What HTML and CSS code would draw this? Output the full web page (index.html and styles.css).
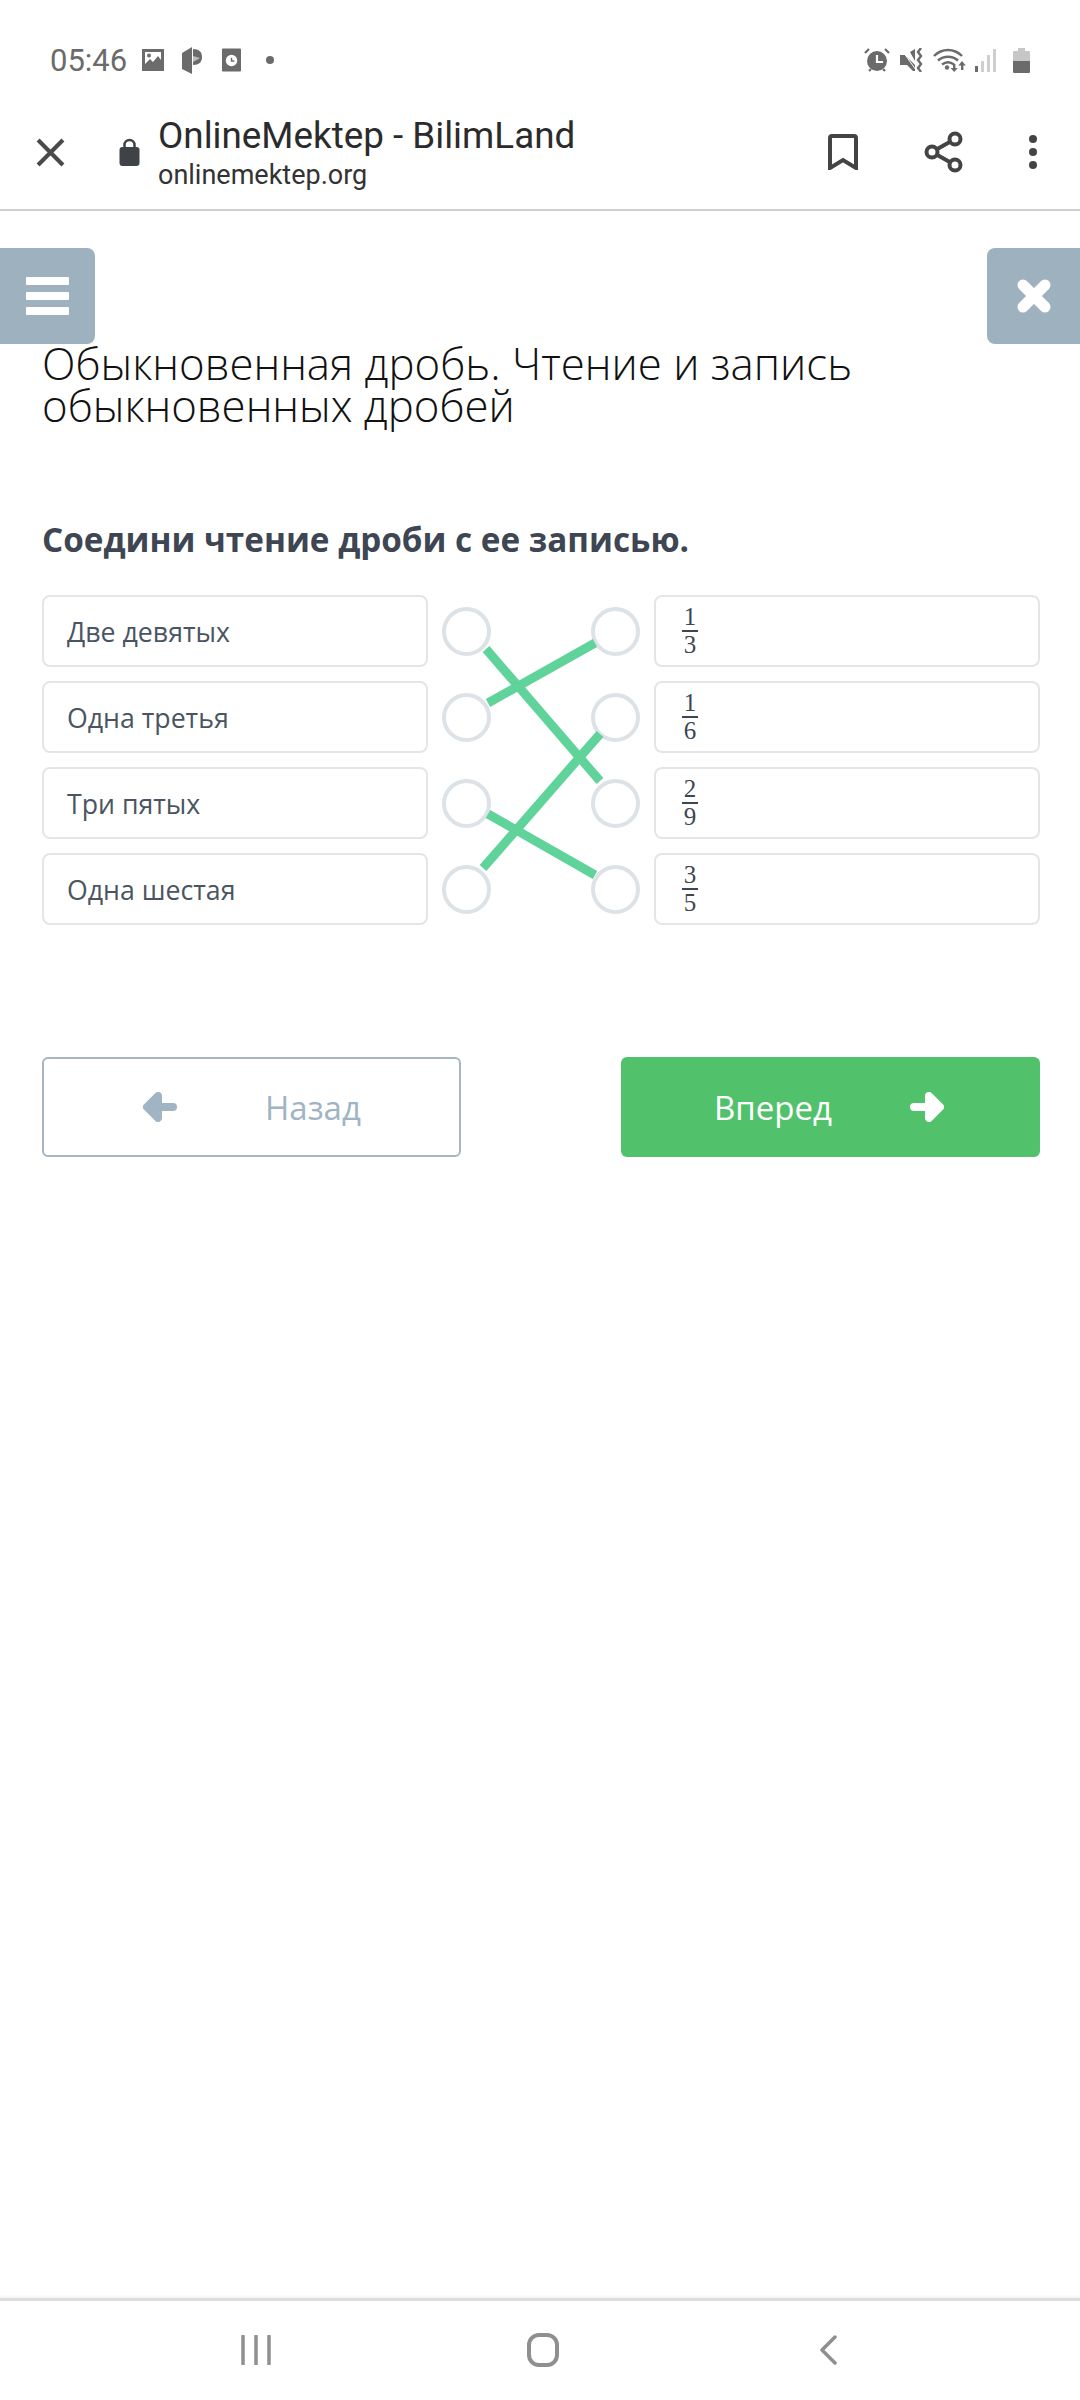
FILE: index.html
```html
<!DOCTYPE html>
<html lang="en">
<head>
    <meta charset="UTF-8">
    <title>OnlineMektep - BilimLand</title>
    <link rel="stylesheet" href="styles.css">
</head>
<body>
    <div class="statusbar">
        <span class="time">05:46</span>
        <svg class="st-pic" viewBox="0 0 24 24"><path fill="#6b6b6b" fill-rule="evenodd" d="M1 1h22v22H1zM4 4v12l5-5 3 3 5-6 3 4V4z"/><circle cx="8" cy="7.500" r="2" fill="#6b6b6b"/></svg>
        <svg class="st-p" viewBox="0 0 20 27"><path fill="#6b6b6b" d="M0 6 10 0v27L0 22z"/><path fill="#6b6b6b" d="M11 2c6 0 9 3 9 8s-3 8-9 8z"/><path fill="#bdbdbd" d="M11 9l7 2-7 4z"/></svg>
        <svg class="st-clock" viewBox="0 0 20 24"><rect width="20" height="24" rx="1" fill="#6b6b6b"/><circle cx="10" cy="12.500" r="6" fill="#fff"/><path d="M10 9.500v3.500h3" fill="none" stroke="#6b6b6b" stroke-width="1.500"/></svg>
        <span class="st-dot"></span>
        <div class="st-right">
            <svg class="st-alarm" viewBox="0 0 26 24"><circle cx="13" cy="13" r="10" fill="#6b6b6b"/><path d="M13 7v7h6" fill="none" stroke="#fff" stroke-width="2.200"/><path d="M1 5l4-4M25 5l-4-4M5 23l2-2M21 23l-2-2" stroke="#6b6b6b" stroke-width="2.200"/></svg>
            <svg class="st-mute" viewBox="0 0 24 24"><path fill="#6b6b6b" d="M0 7h5l10 10v6h-2l-6-6H0zM10 4l5-3v12z"/><path d="M1 1l15 21" stroke="#fff" stroke-width="1"/><path d="M21 0l-3 4 3 4-3 4 3 4-3 4 3 4" fill="none" stroke="#6b6b6b" stroke-width="2.400"/></svg>
            <svg class="st-wifi" viewBox="0 0 33 24"><g fill="none" stroke="#6b6b6b" stroke-width="2.400"><path d="M1 8c8-8 20-8 28 0"/><path d="M5 12.500c6-5 14-5 20 0"/><path d="M9 16.500c4-3 8-3 12 0"/></g><circle cx="14" cy="19.500" r="2.200" fill="#6b6b6b"/><path fill="#6b6b6b" d="M20 16h2.400v4h2.400l-3.600 4-3.600-4H20zM29 13l3.800 4.500h-2.400V22H28v-4.500h-2.600z"/></svg>
            <svg class="st-signal" viewBox="0 0 22 23"><rect x="0" y="17" width="3" height="6" fill="#6b6b6b"/><rect x="6" y="12" width="3" height="11" fill="#cfcfcf"/><rect x="12" y="6" width="3" height="17" fill="#cfcfcf"/><rect x="18" y="0" width="3" height="23" fill="#cfcfcf"/></svg>
            <svg class="st-batt" viewBox="0 0 17 25"><path fill="#c6c6c6" d="M5 0h7v3h4a1 1 0 0 1 1 1v10H0V4a1 1 0 0 1 1-1h4z"/><path fill="#6b6b6b" d="M0 13h17v11a1 1 0 0 1-1 1H1a1 1 0 0 1-1-1z"/></svg>
        </div>
    </div>

    <div class="toolbar">
        <svg class="tb-close" viewBox="0 0 28 28"><path d="M2 2l24 24M26 2L2 26" stroke="#4a4a4a" stroke-width="4"/></svg>
        <svg class="tb-lock" viewBox="0 0 20 28"><path d="M5 11V7a5 5 0 0 1 10 0v4" fill="none" stroke="#3f4347" stroke-width="2.500"/><rect y="9" width="20" height="19" rx="3" fill="#3f4347"/></svg>
        <div class="tb-title">
            <div class="tb-name">OnlineMektep - BilimLand</div>
            <div class="tb-url">onlinemektep.org</div>
        </div>
        <svg class="tb-mark" viewBox="0 0 30 36"><path d="M2 34V4a2 2 0 0 1 2-2h22a2 2 0 0 1 2 2v30L15 26z" fill="none" stroke="#444" stroke-width="4"/></svg>
        <svg class="tb-share" viewBox="0 0 40 42"><path d="M31 8 8 21l23 13" fill="none" stroke="#444" stroke-width="4"/><g fill="#fff" stroke="#444" stroke-width="4"><circle cx="31" cy="8" r="5.500"/><circle cx="8" cy="21" r="5.500"/><circle cx="31" cy="34" r="5.500"/></g></svg>
        <div class="tb-dots"><span></span><span></span><span></span></div>
    </div>

    <div class="page">
        <div class="float-btns">
            <button class="side-btn side-left">
                <span class="burger"><span></span><span></span><span></span></span>
            </button>
            <button class="side-btn side-right">
                <svg class="times" viewBox="0 0 36 36"><path d="M7 7l22 22M29 7L7 29" stroke="#fff" stroke-width="11" stroke-linecap="round"/></svg>
            </button>
        </div>

        <h1>Обыкновенная дробь. Чтение и запись обыкновенных дробей</h1>
        <p class="task">Соедини чтение дроби с ее записью.</p>

        <div class="match">
            <svg class="links" viewBox="0 0 1000 331">
                <path d="M444 55 558 187"/>
                <path d="M446 109 553 49"/>
                <path d="M441 274 558 140"/>
                <path d="M446 220 553 281"/>
            </svg>
            <div class="match-row">
                <div class="cell">Две девятых</div>
                <div class="dots"><span class="dot"></span><span class="dot"></span></div>
                <div class="cell"><span class="frac"><span>1</span><span class="den">3</span></span></div>
            </div>
            <div class="match-row">
                <div class="cell">Одна третья</div>
                <div class="dots"><span class="dot"></span><span class="dot"></span></div>
                <div class="cell"><span class="frac"><span>1</span><span class="den">6</span></span></div>
            </div>
            <div class="match-row">
                <div class="cell">Три пятых</div>
                <div class="dots"><span class="dot"></span><span class="dot"></span></div>
                <div class="cell"><span class="frac"><span>2</span><span class="den">9</span></span></div>
            </div>
            <div class="match-row">
                <div class="cell">Одна шестая</div>
                <div class="dots"><span class="dot"></span><span class="dot"></span></div>
                <div class="cell"><span class="frac"><span>3</span><span class="den">5</span></span></div>
            </div>
        </div>

        <div class="nav-btns">
            <button class="nav-btn btn-back">
                <svg class="arrow" viewBox="0 0 34 30"><path d="M15 4 4 15l11 11zM10 15h20" fill="#a0b4c3" stroke="#a0b4c3" stroke-width="8" stroke-linecap="round" stroke-linejoin="round"/></svg>
                <span>Назад</span>
            </button>
            <button class="nav-btn btn-next">
                <span>Вперед</span>
                <svg class="arrow" viewBox="0 0 34 30"><path d="M19 4l11 11-11 11zM24 15H4" fill="#fff" stroke="#fff" stroke-width="8" stroke-linecap="round" stroke-linejoin="round"/></svg>
            </button>
        </div>
    </div>

    <div class="navbar">
        <svg class="nb-recent" viewBox="0 0 30 30"><path d="M2 1v28M15 1v28M28 1v28" stroke="#8f8f8f" stroke-width="3.500" stroke-linecap="round"/></svg>
        <svg class="nb-home" viewBox="0 0 32 34"><rect x="2" y="2" width="28" height="30" rx="10" fill="none" stroke="#8f8f8f" stroke-width="4"/></svg>
        <svg class="nb-back" viewBox="0 0 18 30"><path d="M16 2 3 15l13 13" fill="none" stroke="#8f8f8f" stroke-width="3.500" stroke-linecap="round" stroke-linejoin="round"/></svg>
    </div>
</body>
</html>
```

FILE: styles.css
```css
* {
    margin: 0;
    padding: 0;
    box-sizing: border-box;
}

html, body {
    height: 2400px;
    background: #fff;
}

body {
    display: flex;
    flex-direction: column;
    font-family: "Open Sans", sans-serif;
    overflow: hidden;
}

svg {
    display: block;
    flex: none;
}

/* status bar */
.statusbar {
    height: 105px;
    padding: 15px 50px 0 50px;
    display: flex;
    align-items: center;
}

.time {
    font-family: Roboto, sans-serif;
    font-size: 31px;
    color: #6b6b6b;
    width: 91px;
}

.st-pic { width: 24px; height: 24px; }
.st-p { width: 20px; height: 27px; margin-left: 17px; }
.st-clock { width: 19px; height: 24px; margin-left: 20px; }

.st-dot {
    width: 8px;
    height: 8px;
    border-radius: 50%;
    background: #6b6b6b;
    margin-left: 25px;
}

.st-right {
    margin-left: auto;
    display: flex;
    align-items: center;
}

.st-alarm { width: 26px; height: 24px; }
.st-mute { width: 24px; height: 24px; margin-left: 10px; }
.st-wifi { width: 33px; height: 24px; margin-left: 9px; }
.st-signal { width: 22px; height: 23px; margin-left: 9px; }
.st-batt { width: 17px; height: 25px; margin-left: 16px; }

/* browser toolbar */
.toolbar {
    height: 106px;
    display: flex;
    align-items: center;
    border-bottom: 2px solid #cfcfcf;
    padding: 0 0 10px 36px;
}

.tb-close { width: 29px; height: 29px; }
.tb-lock { width: 21px; height: 28px; margin-left: 54px; }

.tb-title {
    margin-left: 18px;
    width: 670px;
    font-family: Roboto, sans-serif;
}

.tb-name {
    font-size: 36.800px;
    line-height: 42px;
    margin-top: 2px;
    color: #2b2b2b;
}

.tb-url {
    font-size: 27px;
    line-height: 32px;
    margin-top: 2px;
    color: #333;
}

.tb-mark { width: 30px; height: 36px; }
.tb-share { width: 40px; height: 42px; margin-left: 66px; }

.tb-dots {
    margin-left: 65px;
    display: flex;
    flex-direction: column;
    gap: 5px;
}

.tb-dots span {
    width: 8px;
    height: 8px;
    border-radius: 50%;
    background: #444;
}

/* page */
.page {
    flex: 1;
}

.float-btns {
    display: flex;
    justify-content: space-between;
    padding-top: 37px;
}

.side-btn {
    width: 95px;
    height: 96px;
    background: #9db2be;
    border: none;
    display: flex;
    align-items: center;
    justify-content: center;
}

.side-left {
    border-radius: 0 8px 8px 0;
}

.side-right {
    width: 93px;
    border-radius: 8px 0 0 8px;
}

.burger {
    display: flex;
    flex-direction: column;
    gap: 7px;
    width: 43px;
}

.burger span {
    height: 8px;
    background: #fff;
    border-radius: 1px;
}

.times {
    width: 36px;
    height: 36px;
}

h1 {
    font-weight: 300;
    font-size: 43.750px;
    line-height: 42px;
    color: #111;
    margin-top: -2px;
    padding: 0 220px 0 42px;
}

.task {
    font-weight: 700;
    font-size: 33.250px;
    line-height: 44px;
    color: #3d4652;
    margin: 91px 42px 0;
}

/* matching */
.match {
    position: relative;
    margin: 34px 40px 0 42px;
    display: flex;
    flex-direction: column;
    gap: 14px;
}

.links {
    position: absolute;
    left: 0;
    top: -1px;
    width: 1000px;
    height: 331px;
}

.links path {
    stroke: #5fd39a;
    stroke-width: 9;
    fill: none;
}

.match-row {
    display: flex;
    align-items: center;
    height: 72px;
}

.cell {
    width: 386px;
    height: 72px;
    border: 2px solid #e3e5e7;
    border-radius: 8px;
    display: flex;
    align-items: center;
    padding-left: 23px;
    font-size: 26.700px;
    color: #4a5561;
    background: #fff;
}

.dots {
    flex: 1;
    display: flex;
    justify-content: space-between;
    padding: 0 14px;
}

.dot {
    width: 49px;
    height: 49px;
    border-radius: 50%;
    border: 4px solid #dde2e7;
}

.frac {
    display: inline-flex;
    flex-direction: column;
    align-items: center;
    width: 16px;
    margin-left: 3px;
    font-family: "Liberation Serif", serif;
    font-size: 25px;
    line-height: 24px;
    color: #3d4652;
}

.den {
    width: 100%;
    text-align: center;
    border-top: 2px solid #3d4652;
    margin-top: 1px;
    line-height: 26px;
}

/* nav buttons */
.nav-btns {
    display: flex;
    justify-content: space-between;
    margin: 132px 40px 0 42px;
}

.nav-btn {
    height: 100px;
    border-radius: 6px;
    font-family: "Open Sans", sans-serif;
    font-size: 33px;
    display: flex;
    align-items: center;
}

.arrow {
    width: 34px;
    height: 30px;
}

.btn-back {
    width: 419px;
    background: #fff;
    border: 2px solid #a6b5bf;
    color: #a0b4c3;
    padding-left: 99px;
    gap: 88px;
}

.btn-next {
    width: 419px;
    background: #52c16b;
    border: none;
    color: #fff;
    padding-left: 93px;
    gap: 78px;
}

/* android nav */
.navbar {
    height: 102px;
    border-top: 3px solid #dedede;
    box-shadow: 0 -2px 2px rgba(0,0,0,0.05);
    display: flex;
    align-items: center;
    padding-bottom: 2px;
}

.nb-recent { width: 30px; height: 30px; margin-left: 241px; }
.nb-home { width: 32px; height: 34px; margin-left: 256px; }
.nb-back { width: 18px; height: 30px; margin-left: 260px; }
```
